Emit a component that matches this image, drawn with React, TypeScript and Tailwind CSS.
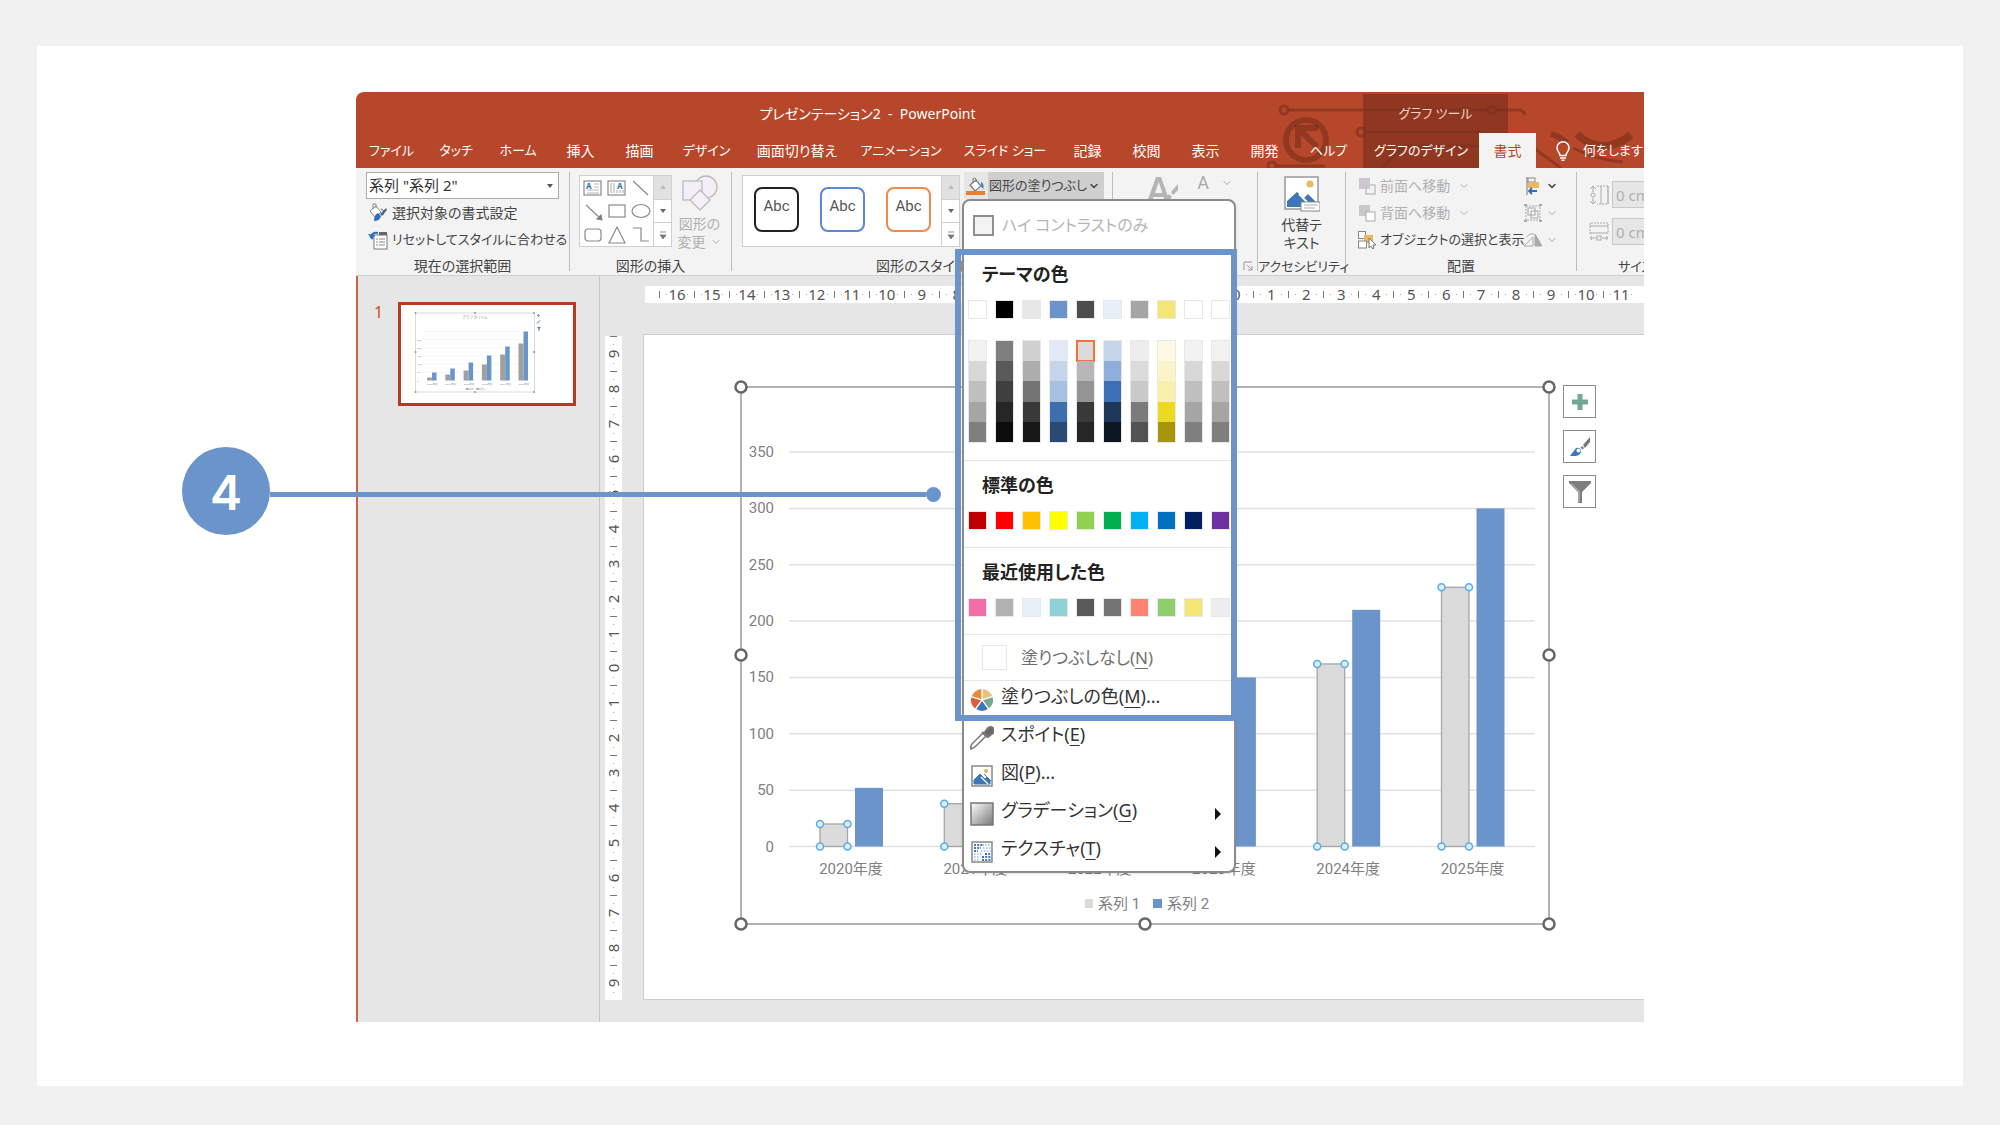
import type { ReactNode } from 'react'
import { FiChevronDown } from 'react-icons/fi'

const tabs = [
  'ファイル', 'タッチ', 'ホーム', '挿入', '描画', 'デザイン', '画面切り替え', 'アニメーション',
  'スライド ショー', '記録', '校閲', '表示', '開発', 'ヘルプ',
]

const themeColors = ['#ffffff', '#000000', '#e7e7e7', '#6b95ca', '#4d4d4d', '#e8eff8', '#a5a5a5', '#f4e675', '#ffffff', '#ffffff']

const tints = [
  ['#f2f2f2', '#d8d8d8', '#bfbfbf', '#a5a5a5', '#7f7f7f'],
  ['#7f7f7f', '#595959', '#3f3f3f', '#262626', '#0c0c0c'],
  ['#d0d0d0', '#adadad', '#737373', '#393939', '#171717'],
  ['#e1eaf4', '#c4d5ea', '#a6c0df', '#3d6fad', '#284a73'],
  ['#dbdbdb', '#b7b7b7', '#949494', '#393939', '#262626'],
  ['#c5d6eb', '#8faedb', '#3d6fb4', '#1e3859', '#0c1622'],
  ['#ededed', '#dbdbdb', '#c9c9c9', '#7b7b7b', '#525252'],
  ['#fcfae3', '#faf5c8', '#f8f0ac', '#ecd922', '#a6960d'],
  ['#f2f2f2', '#d8d8d8', '#bfbfbf', '#a5a5a5', '#7f7f7f'],
  ['#f2f2f2', '#d8d8d8', '#bfbfbf', '#a5a5a5', '#7f7f7f'],
]

const standardColors = ['#c00000', '#ff0000', '#ffc000', '#ffff00', '#92d050', '#00b050', '#00b0f0', '#0070c0', '#002060', '#7030a0']
const recentColors = ['#f16ea8', '#b2b2b2', '#e8eff8', '#8ed2d8', '#595959', '#737373', '#ff836f', '#8ecf6d', '#f4e675', '#ededf0']

const chartData = [
  { label: '2020年度', a: 20, b: 52 },
  { label: '2021年度', a: 38, b: 75 },
  { label: '2022年度', a: 65, b: 110 },
  { label: '2023年度', a: 102, b: 150 },
  { label: '2024年度', a: 162, b: 210 },
  { label: '2025年度', a: 230, b: 300 },
]

/* ---------- header ---------- */

function HeaderArt() {
  return (
    <svg className="absolute top-0 left-[907px] w-[380px] h-[76px]" viewBox="0 0 380 76" fill="none" stroke="#000" strokeOpacity="0.2" strokeWidth="3">
      <circle cx="21" cy="18" r="4" />
      <path d="M26 18H224M234 18H254q7 0 8 5" />
      <circle cx="229" cy="18" r="4" />
      <circle cx="43" cy="48" r="20" strokeWidth="6" />
      <path d="M35 56V36h20M36 37l18 18" strokeWidth="6" />
      <circle cx="9" cy="74" r="4" />
      <path d="M14 74H62M103 40H218" />
      <circle cx="98" cy="40" r="4" />
      <path d="M118 76L142 54H260q10 0 16 6L298 76" />
      <path d="M288 42q10 3 16 9" strokeWidth="6" />
      <path d="M314 42q24 24 54 1" strokeWidth="8" />
      <path d="M310 56q24 12 50 14" />
    </svg>
  )
}

function Header() {
  return (
    <header className="relative overflow-hidden rounded-tl-lg bg-[#b7472a] text-sm text-white whitespace-nowrap">
      <HeaderArt />
      <div className="relative grid grid-cols-[1007px_145px_1fr] h-[41px] pt-[2px]">
        <div className="flex items-center justify-center pl-4 whitespace-pre">プレゼンテーション2  -  PowerPoint</div>
        <div className="flex items-center justify-center bg-[#7a2f1c]/65 text-[13px] text-[#f5cfc4]">グラフ ツール</div>
      </div>
      <nav className="relative grid grid-cols-[71px_58px_66px_59px_59px_75px_106px_102px_106px_59px_59px_59px_59px_69px_116px_57px_1fr] h-[35px]">
        {tabs.map((t) => (
          <button key={t} className={`flex items-center justify-center ${/[ァ-ヶ]/.test(t) ? 'text-[13px]' : 'text-sm'}`}>{t}</button>
        ))}
        <button className="flex items-center justify-center bg-[#7a2f1c]/65 text-[13px]">グラフのデザイン</button>
        <button className="flex items-center justify-center bg-[#f3f3f3] text-[#b7472a]">書式</button>
        <button className="flex items-center gap-3 pl-[19px] text-[13px]">
          <svg className="w-4 h-5 shrink-0" viewBox="0 0 16 20" fill="none" stroke="#fff" strokeWidth="1.5">
            <path d="M5 14.500C5 11.500 2 10.500 2 6.800a6 6 0 0 1 12 0C14 10.500 11 11.500 11 14.500zM5 17h6M6.500 19.200h3" />
          </svg>
          何をします
        </button>
      </nav>
    </header>
  )
}

/* ---------- ribbon ---------- */

function Group({ label, className, children }: { label: string; className: string; children: ReactNode }) {
  return (
    <section className={`flex flex-col shrink-0 pt-1 pb-1 ${className}`}>
      <div className="relative flex flex-col h-full border-r border-[#bdbdbd]">
        <div className="flex-1">{children}</div>
        <h2 className="-mb-1 h-[18px] text-center leading-[18px]">{label}</h2>
      </div>
    </section>
  )
}

function GalleryScroll() {
  return (
    <div className="flex flex-col w-[18px] border-l border-[#d0d0d0]">
      <button aria-label="上へ" className="flex-1 flex items-center justify-center bg-[#e1e1e1]">
        <svg className="w-2 h-1" viewBox="0 0 8 4"><path d="M1 4L4 0l3 4z" fill="#bbb" /></svg>
      </button>
      <button aria-label="下へ" className="flex-1 flex items-center justify-center bg-white border-y border-[#d0d0d0]">
        <svg className="w-2 h-1" viewBox="0 0 8 4"><path d="M1 0h6L4 4z" fill="#666" /></svg>
      </button>
      <button aria-label="その他" className="flex-1 flex items-center justify-center bg-white">
        <svg className="w-2 h-2" viewBox="0 0 8 8"><path d="M1 1h6M1 4h6L4 8z" fill="#777" stroke="#777" strokeWidth="0.8" /></svg>
      </button>
    </div>
  )
}

function ShapeGrid() {
  return (
    <svg className="w-[73px] h-[70px] bg-white" viewBox="0 0 73 70" fill="none" stroke="#8a8a8a" strokeWidth="1.2">
      <rect x="4" y="5" width="17" height="14" />
      <path d="M14 8h5M14 11h5M7 14h12M7 17h12" stroke="#b5b5b5" />
      <text x="6" y="13" fontSize="8" fontWeight="700" fill="#2f6db5" stroke="none">A</text>
      <rect x="28" y="5" width="17" height="14" />
      <path d="M31 7v10M34 7v10M37 14v3M40 14v3M43 14v3" stroke="#b5b5b5" />
      <text x="37" y="13" fontSize="8" fontWeight="700" fill="#2f6db5" stroke="none">A</text>
      <path d="M53 5l15 14M6 29l14 13" />
      <path d="M22 44l-5-1 4-4z" fill="#777" />
      <rect x="29" y="29" width="16" height="12" />
      <ellipse cx="61" cy="35" rx="9" ry="6.500" />
      <rect x="5" y="53" width="16" height="12" rx="3" />
      <path d="M37 51l8 16H29zM53 52h8v13h8" />
    </svg>
  )
}

function BucketIcon() {
  return (
    <svg className="w-5 h-[18px]" viewBox="0 0 20 18" fill="none">
      <path d="M4 8l6-5 5 6-6 5z" fill="#fff" stroke="#777" strokeWidth="1.200" />
      <path d="M7 6V2q1-2 3 0v3" stroke="#777" />
      <path d="M15 5q3 1 2.500 7l-2-2z" fill="#2f78bd" />
      <rect y="14" width="19" height="4" fill="#ed7d31" />
    </svg>
  )
}

function SelectionGroup() {
  return (
    <Group label="現在の選択範囲" className="w-[214px]">
      <div className="flex flex-col px-[10px]">
        <div className="relative flex items-center">
          <select aria-label="グラフ要素" className="w-full h-[27px] appearance-none border border-[#ababab] bg-white pl-[2px] text-[15px] text-[#333]">
            <option>系列 "系列 2"</option>
          </select>
          <svg className="absolute right-[5px] w-2 h-1 pointer-events-none" viewBox="0 0 8 4"><path d="M1 0h6L4 4z" fill="#555" /></svg>
        </div>
        <button className="flex items-center gap-1 h-[27px] pl-[2px]">
          <svg className="w-5 h-5 shrink-0" viewBox="0 0 20 20" fill="none">
            <path d="M2 8l6-5 5 6-6 5z" fill="#fff" stroke="#888" />
            <path d="M5 6V1h3v4" stroke="#888" />
            <path d="M6 18q0-6 4-8l3 3q-1 5-7 5z" fill="#2f6db5" />
            <path d="M12 11l6-6 1 2-5 6z" fill="#666" />
            <path d="M13 6q4 1 2 6" stroke="#2f6db5" />
          </svg>
          選択対象の書式設定
        </button>
        <button className="flex items-center gap-1 h-[27px] pl-[2px] text-[13px]">
          <svg className="w-5 h-5 shrink-0" viewBox="0 0 20 20" fill="none">
            <rect x="6" y="5" width="13" height="14" fill="#fff" stroke="#777" />
            <path d="M11 2h8v3h-8z" fill="#666" />
            <path d="M8 9h2M8 12h2M8 15h2M11 9h6M11 12h6M11 15h6" stroke="#888" />
            <path d="M3 8Q3 2 10 3" stroke="#2f6db5" strokeWidth="2" />
            <path d="M0 4l7 1-3 5z" fill="#2f6db5" />
          </svg>
          リセットしてスタイルに合わせる
        </button>
      </div>
    </Group>
  )
}

function InsertGroup() {
  return (
    <Group label="図形の挿入" className="w-[162px]">
      <div className="flex pt-[3px] pl-[9px] pr-1">
        <div className="flex h-[72px] border border-[#d0d0d0]">
          <ShapeGrid />
          <GalleryScroll />
        </div>
        <button className="flex-1 flex flex-col items-center text-[#b0b0b0] leading-[18px]">
          <svg className="w-9 h-9 mb-1" viewBox="0 0 36 36" fill="#f4eff6" stroke="#bbb" strokeWidth="1.300">
            <circle cx="24" cy="12" r="11" />
            <rect x="1" y="6" width="19" height="19" />
            <path d="M18 15l10 10-10 10L8 25z" />
          </svg>
          <span>図形の</span>
          <span className="flex items-center gap-1">変更 <FiChevronDown className="size-3" /></span>
        </button>
      </div>
    </Group>
  )
}

function Swatch({ color }: { color: string }) {
  return <button aria-label={color} className="size-[19px] shrink-0 border border-[#e8e8e8]" style={{ backgroundColor: color }} />
}

function SwatchRow({ colors }: { colors: string[] }) {
  return (
    <div className="flex gap-2 mt-2 overflow-hidden">
      {colors.map((c, i) => <Swatch key={i} color={c} />)}
    </div>
  )
}

function MenuItem({ icon, text, hotkey, dots, arrow }: { icon: ReactNode; text: string; hotkey: string; dots?: boolean; arrow?: boolean }) {
  return (
    <button className="flex w-full items-center h-[38px] pl-[6px] pr-3 gap-[7px]">
      <svg className="w-6 h-6 shrink-0" viewBox="0 0 24 24">{icon}</svg>
      <span className="pb-2">{text}(<u className="underline-offset-4">{hotkey}</u>){dots && '...'}</span>
      {arrow && <svg className="ml-auto w-2 h-3" viewBox="0 0 8 12"><path d="M1 0l6 6-6 6z" fill="#111" /></svg>}
    </button>
  )
}

function FillMenu() {
  return (
    <div className="absolute left-[-2px] top-full z-10 w-[274px] rounded-lg border-2 border-[#8c8c8c] bg-white text-lg leading-6 text-[#333] shadow-sm">
      <label className="flex items-center gap-2 h-12 pl-[9px] text-base text-[#b5b5b5]">
        <input type="checkbox" className="appearance-none size-[21px] border-2 border-[#8f8f8f] bg-[#f3f3f3]" />
        ハイ コントラストのみ
      </label>
      <section className="border-b border-[#e6e6e6] pt-[7px] pb-[17px] pl-1">
        <h3 className="h-9 pl-3.5 leading-9 font-bold text-[#222]">テーマの色</h3>
        <SwatchRow colors={themeColors} />
        <div className="flex gap-2 mt-[21px] h-[103px] overflow-hidden">
          {tints.map((col, i) => (
            <div key={i} className="flex flex-col w-[19px] shrink-0 border border-[#e8e8e8]">
              {col.map((c, j) => (
                <button
                  key={j}
                  aria-label={c}
                  className={i === 4 && j === 0 ? 'flex-1 outline-2 -outline-offset-1 outline-[#f0733a]' : 'flex-1'}
                  style={{ backgroundColor: c }}
                />
              ))}
            </div>
          ))}
        </div>
      </section>
      <section className="border-b border-[#e6e6e6] pt-1.5 pb-[17px] pl-1">
        <h3 className="h-9 pl-3.5 leading-9 font-bold text-[#222]">標準の色</h3>
        <SwatchRow colors={standardColors} />
      </section>
      <section className="border-b border-[#e6e6e6] pt-1.5 pb-[17px] pl-1">
        <h3 className="h-9 pl-3.5 leading-9 font-bold text-[#222]">最近使用した色</h3>
        <SwatchRow colors={recentColors} />
      </section>
      <button className="flex w-full items-center gap-3.5 h-[46px] pl-[18px] border-b border-[#e6e6e6] text-[17px] text-[#707070]">
        <span className="size-[25px] border border-[#e6e6e6]" />
        <span>塗りつぶしなし(<u className="underline-offset-4">N</u>)</span>
      </button>
      <MenuItem
        text="塗りつぶしの色" hotkey="M" dots
        icon={
          <g stroke="#fff" strokeWidth="1.2">
            <path d="M12 12V0.500A11.500 11.500 0 0 1 23 8.500z" fill="#e8c07a" />
            <path d="M12 12L23 8.500A11.500 11.500 0 0 1 18.800 21.300z" fill="#74a893" />
            <path d="M12 12l6.800 9.300a11.500 11.500 0 0 1-13.600 0z" fill="#3d77b8" />
            <path d="M12 12L5.200 21.300A11.500 11.500 0 0 1 1 8.500z" fill="#d9603f" />
            <path d="M12 12L1 8.500A11.500 11.500 0 0 1 12 0.500z" fill="#e88a3c" />
          </g>
        }
      />
      <MenuItem
        text="スポイト" hotkey="E"
        icon={
          <g fill="none" stroke="#777" strokeWidth="1.500">
            <path d="M1 23q-1-4 3-7l9-9 3 3-9 9q-3 3-6 4z" />
            <path d="M12 6l5 5M14 7l4-5q3-2 5 0t0 5l-5 4z" fill="#666" strokeWidth="2" />
          </g>
        }
      />
      <MenuItem
        text="図" hotkey="P" dots
        icon={
          <>
            <rect x="2" y="2" width="20" height="20" fill="#fff" stroke="#888" strokeWidth="1.500" />
            <circle cx="16" cy="7" r="2" fill="#e8b25a" />
            <path d="M4 20v-4l6-6 5 5 2-2 3 3v4zM14 10l7 7" fill="#3d77b8" stroke="#3d77b8" />
            <path d="M11 13l7 7" stroke="#fff" strokeWidth="1.200" />
          </>
        }
      />
      <MenuItem
        text="グラデーション" hotkey="G" arrow
        icon={
          <>
            <defs>
              <linearGradient id="grad" x1="0" y1="0" x2="1" y2="1">
                <stop offset="0" stopColor="#fff" />
                <stop offset="1" stopColor="#777" />
              </linearGradient>
            </defs>
            <rect x="1" y="1" width="22" height="22" fill="url(#grad)" stroke="#777" strokeWidth="1.500" />
          </>
        }
      />
      <MenuItem
        text="テクスチャ" hotkey="T" arrow
        icon={
          <>
            <rect x="2" y="2" width="20" height="20" fill="#fff" stroke="#888" strokeWidth="1.500" />
            <g stroke="#3d77b8" strokeWidth="2" strokeDasharray="2 1.200">
              <path d="M4 5h10M4 8h7M4 11h4M12 20h9M12 17h9M15 14h6" />
            </g>
            <g stroke="#9dbbe0" strokeWidth="1.500" strokeDasharray="1.500 1.500">
              <path d="M15 5h6M13 8h8M11 11h10M4 14h9M4 17h6M4 20h6" />
            </g>
          </>
        }
      />
      {/* highlighted part of the menu */}
      <div className="absolute left-[-9px] top-12 w-[282px] h-[472px] border-6 border-[#6b95ca] pointer-events-none" />
    </div>
  )
}

function StyleBox({ className }: { className: string }) {
  return (
    <button className={`size-[45px] pb-1 rounded-lg border-2 bg-white font-[Roboto] text-[15px] text-[#555] ${className}`}>Abc</button>
  )
}

function StylesGroup() {
  return (
    <Group label="図形のスタイル" className="w-[381px]">
      <div className="flex items-start pl-[10px] pr-2">
        <div className="flex h-[72px] mt-[3px] border border-[#d0d0d0] bg-white">
          <div className="flex items-center gap-[21px] pl-[11px] pr-[10px] pb-1">
            <StyleBox className="border-[#222]" />
            <StyleBox className="border-[#5b87d6]" />
            <StyleBox className="border-[#f08a4b]" />
          </div>
          <GalleryScroll />
        </div>
        <div className="relative ml-1">
          <button className="flex items-center h-[27px] w-[140px] bg-[#cfcfcf] text-[13px]">
            <span className="flex items-center justify-center self-stretch w-6 bg-[#e6e6e6]"><BucketIcon /></span>
            <span className="flex-1">図形の塗りつぶし</span>
            <FiChevronDown className="size-3 mr-1" strokeWidth={3} />
          </button>
          <FillMenu />
        </div>
      </div>
    </Group>
  )
}

function WordArtGroup() {
  return (
    <Group label="" className="w-[145px]">
      <div className="flex items-start justify-end gap-4 pt-[3px] pr-6 text-[#aaa]">
        <svg className="w-9 h-9" viewBox="0 0 36 36" fill="#b5b5b5">
          <path d="M1 30L11 2h5l10 28h-5l-2.500-8H8.500L6 30zM10 18h7.500L13.700 7z" />
          <path d="M20 24l4-5 3 3-4 4zM26 17l7-8v6l-5 5z" />
        </svg>
        <button className="flex items-center gap-3 font-[Roboto] text-lg leading-4">A <FiChevronDown className="size-3" /></button>
      </div>
      <button aria-label="書式の詳細" className="absolute right-1 bottom-0">
        <svg className="w-[10px] h-[10px]" viewBox="0 0 10 10" fill="none" stroke="#999"><path d="M1 9V1h8M4 4l5 5M9 5v4H5" /></svg>
      </button>
    </Group>
  )
}

function AccessibilityGroup() {
  return (
    <Group label="アクセシビリティ" className="w-[88px] text-[13px]">
      <button className="flex w-full flex-col items-center pt-1 text-sm leading-[18px]">
        <svg className="w-9 h-9 mb-1" viewBox="0 0 36 36">
          <rect x="1" y="1" width="33" height="32" fill="#fff" stroke="#999" strokeWidth="1.500" />
          <circle cx="26" cy="8" r="3.500" fill="#e8b95f" />
          <path d="M3 31v-6l10-9 7 6 4-4 9 9v4z" fill="#3d77b8" />
          <path d="M15 18l9 9" stroke="#fff" strokeWidth="2" />
          <rect x="17" y="26" width="19" height="9" fill="#fff" stroke="#888" />
          <path d="M20 29h14M20 32h11" stroke="#aaa" />
        </svg>
        <span>代替テ</span>
        <span>キスト</span>
      </button>
    </Group>
  )
}

function ArrangeGroup() {
  return (
    <Group label="配置" className="w-[231px]">
      <div className="flex justify-between pl-3 pr-[22px]">
        <div className="flex flex-col">
          <button className="flex items-center gap-1 h-[27px] text-[#b0b0b0]">
            <svg className="w-[18px] h-[18px]" viewBox="0 0 18 18"><rect x="8" y="8" width="9" height="9" fill="none" stroke="#aaa" /><rect x="1" y="1" width="11" height="11" fill="#cdc6cf" /></svg>
            前面へ移動
            <FiChevronDown className="size-3 ml-1" />
          </button>
          <button className="flex items-center gap-1 h-[27px] text-[#b0b0b0]">
            <svg className="w-[18px] h-[18px]" viewBox="0 0 18 18"><rect x="1" y="1" width="11" height="11" fill="#cdc6cf" /><rect x="8" y="8" width="9" height="9" fill="#fff" stroke="#aaa" /></svg>
            背面へ移動
            <FiChevronDown className="size-3 ml-1" />
          </button>
          <button className="flex items-center gap-1 h-[27px] text-[13px]">
            <svg className="w-[18px] h-[18px]" viewBox="0 0 18 18">
              <rect x="0.500" y="0.500" width="7" height="7" fill="#fff" stroke="#888" />
              <rect x="6" y="4" width="9" height="8" fill="#e8b95f" />
              <rect x="0.500" y="10" width="8" height="7" fill="#fff" stroke="#888" />
              <path d="M11 7v10l2-2 2 3 1-1-1-3h3z" fill="#fff" stroke="#777" />
            </svg>
            オブジェクトの選択と表示
          </button>
        </div>
        <div className="flex flex-col">
          <button aria-label="配置" className="flex items-center gap-1 h-[27px]">
            <svg className="w-[18px] h-[18px]" viewBox="0 0 18 18" fill="none">
              <path d="M3 0v18" stroke="#777" />
              <rect x="4" y="1" width="7" height="4" stroke="#888" />
              <rect x="4" y="5" width="11" height="6" fill="#e8b95f" />
              <path d="M5 14h8M8 11l-3 3 3 3" stroke="#2f6db5" strokeWidth="1.800" />
            </svg>
            <FiChevronDown className="size-3" strokeWidth={3} />
          </button>
          <button aria-label="グループ化" className="flex items-center gap-1 h-[27px] text-[#aaa]">
            <svg className="w-[18px] h-[18px]" viewBox="0 0 18 18" fill="none" stroke="#aaa">
              <rect x="2" y="2" width="14" height="14" strokeDasharray="2 1" />
              <rect x="4" y="4" width="7" height="7" />
              <rect x="7" y="7" width="7" height="7" />
              <path d="M0 1h3M15 1h3M0 17h3M15 17h3" strokeWidth="2" />
            </svg>
            <FiChevronDown className="size-3" />
          </button>
          <button aria-label="回転" className="flex items-center gap-1 h-[27px] text-[#aaa]">
            <svg className="w-[18px] h-[18px]" viewBox="0 0 18 18" fill="none" stroke="#aaa">
              <path d="M0 15h9V6zM3 6q2-4 7-3" />
              <path d="M11 3v12h7z" fill="#aaa" />
            </svg>
            <FiChevronDown className="size-3" />
          </button>
        </div>
      </div>
    </Group>
  )
}

function SizeGroup() {
  return (
    <section className="flex flex-col flex-1 overflow-hidden pl-3 pt-[13px]">
      <div className="flex flex-col gap-[10px] flex-1">
        <label className="flex items-center gap-[3px]">
          <svg className="w-5 h-5 shrink-0" viewBox="0 0 20 20" fill="none" stroke="#aaa">
            <path d="M4 1v6M4 13v6M1 4l3-3 3 3M1 16l3 3 3-3" />
            <circle cx="4" cy="10" r="2" />
            <path d="M8 1h11v18H8" strokeDasharray="2 1" /><path d="M12 1v18M19 1v18" />
          </svg>
          <input aria-label="高さ" disabled defaultValue="0 cm" className="w-20 shrink-0 h-[27px] border border-[#c8c8c8] bg-[#e6e6e6] pl-[3px] text-[15px] text-[#b0b0b0]" />
        </label>
        <label className="flex items-center gap-[3px]">
          <svg className="w-5 h-5 shrink-0" viewBox="0 0 20 20" fill="none" stroke="#aaa">
            <path d="M1 12V1h18v11" strokeDasharray="2 1" /><path d="M1 4h18M1 11h18" />
            <path d="M1 16h6M13 16h6M3 14l-2 2 2 2M17 14l2 2-2 2" /><rect x="8" y="14" width="4" height="4" />
          </svg>
          <input aria-label="幅" disabled defaultValue="0 cm" className="w-20 shrink-0 h-[27px] border border-[#c8c8c8] bg-[#e6e6e6] pl-[3px] text-[15px] text-[#b0b0b0]" />
        </label>
      </div>
      <h2 className="h-[18px] pl-[29px] text-[13px] leading-[18px]">サイズ</h2>
    </section>
  )
}

function Ribbon() {
  return (
    <div className="relative z-10 flex h-[108px] border-b border-[#d0d0d0] bg-[#f3f3f3] text-sm text-[#444] whitespace-nowrap">
      <SelectionGroup />
      <InsertGroup />
      <StylesGroup />
      <WordArtGroup />
      <AccessibilityGroup />
      <ArrangeGroup />
      <SizeGroup />
    </div>
  )
}

/* ---------- editor ---------- */

const hMarks = Array.from({ length: 28 }, (_, i) => Math.abs(16 - i))
const vMarks = Array.from({ length: 19 }, (_, i) => Math.abs(9 - i))

function HorizontalRuler() {
  return (
    <div className="grid grid-cols-[repeat(28,1fr)] h-[17px] ml-[45px] pl-3.5 pr-1.5 bg-white text-[15px] leading-[17px] text-[#555]">
      {hMarks.map((n, i) => (
        <div key={i} className="flex items-center">
          <span className="w-px h-[7px] bg-[#777]" />
          <span className="flex-1 flex items-center justify-between px-[6px]">
            <span className="size-px bg-[#aaa]" />
            {n}
            <span className="size-px bg-[#aaa]" />
          </span>
        </div>
      ))}
    </div>
  )
}

function VerticalRuler() {
  return (
    <div className="grid grid-rows-[repeat(19,1fr)] w-[17px] mt-[2px] bg-white text-[15px] text-[#555]">
      {vMarks.map((n, i) => (
        <div key={i} className="flex flex-col items-center">
          <span className="w-[7px] h-px bg-[#777]" />
          <span className="flex-1 flex flex-col items-center justify-between py-[7px]">
            <span className="size-px bg-[#aaa]" />
            <span className="-rotate-90 leading-[10px]">{n}</span>
            <span className="size-px bg-[#aaa]" />
          </span>
        </div>
      ))}
    </div>
  )
}

function Chart() {
  const y = (v: number) => 467.5 - v * 1.127
  return (
    <svg className="w-[824px] h-[554px] shrink-0 font-[Roboto,'Noto_Sans_CJK_JP',sans-serif]" viewBox="0 0 824 554" fontSize="15" fill="#808080">
      <rect x="8" y="8" width="808" height="537" fill="none" stroke="#999" strokeWidth="1.500" />
      {[0, 50, 100, 150, 200, 250, 300, 350].map((v) => (
        <g key={v}>
          <path d={`M56 ${y(v)}H802`} stroke="#e1e1e1" strokeWidth="1.500" />
          <text x="41" y={y(v) + 5} textAnchor="end">{v}</text>
        </g>
      ))}
      {chartData.map((d, i) => {
        const x = 87 + i * 124.3
        return (
          <g key={d.label}>
            <rect x={x} y={y(d.a)} width="27.500" height={d.a * 1.127} fill="#dbdbdb" stroke="#a6a6a6" strokeWidth="1.300" />
            <rect x={x + 35} y={y(d.b)} width="28" height={d.b * 1.127} fill="#6b95ca" />
            {[x, x + 27.5].map((cx) => [y(d.a), y(0)].map((cy) => (
              <circle key={`${cx}-${cy}`} cx={cx} cy={cy} r="3.500" fill="#dcefff" stroke="#5aabe8" strokeWidth="1.500" />
            )))}
            <text x={x + 31} y="495" textAnchor="middle">{d.label}</text>
          </g>
        )
      })}
      <rect x="352" y="520" width="8" height="9" fill="#dbdbdb" />
      <text x="365" y="530">系列 1</text>
      <rect x="420" y="520" width="9" height="9" fill="#6b95ca" />
      <text x="434" y="530">系列 2</text>
      {[[8, 8], [412, 8], [816, 8], [8, 276], [816, 276], [8, 545], [412, 545], [816, 545]].map(([cx, cy]) => (
        <circle key={`${cx}-${cy}`} cx={cx} cy={cy} r="5.500" fill="#fff" stroke="#666" strokeWidth="2.500" />
      ))}
    </svg>
  )
}

function ChartButtons() {
  const cls = 'flex items-center justify-center size-[33px] border border-[#8c8c8c] bg-white'
  return (
    <div className="flex flex-col gap-3 pt-[6px]">
      <button aria-label="グラフ要素" className={cls}>
        <svg className="size-4" viewBox="0 0 16 16"><path d="M5.500 0h5v5.500H16v5h-5.500V16h-5v-5.500H0v-5h5.500z" fill="#74a893" /></svg>
      </button>
      <button aria-label="グラフ スタイル" className={cls}>
        <svg className="size-5" viewBox="0 0 20 20">
          <path d="M13 8l7-8v5l-5 6zM12 9l2 2-1.500 1.500-2-2z" fill="#777" />
          <path d="M0 19l6-8q5-1 5 3t-5 5z" fill="#3d77b8" />
          <circle cx="8.500" cy="13.500" r="2" fill="#fff" />
        </svg>
      </button>
      <button aria-label="グラフ フィルター" className={cls}>
        <svg className="w-[22px] h-[22px]" viewBox="0 0 22 22"><path d="M0 0h22v2l-9 9v11H9V11L0 2z" fill="#7d7d7d" /><path d="M2 2.500l8 8V21" stroke="#ccc" fill="none" /></svg>
      </button>
    </div>
  )
}

function Thumbnail() {
  const a = [3, 6, 10, 16, 26, 37]
  const b = [8, 12, 18, 25, 34, 49]
  return (
    <svg className="block w-full" viewBox="0 0 172 98" fontSize="2.500" fill="#999">
      <rect width="172" height="98" fill="#fff" />
      <rect x="14.500" y="8" width="119" height="79" fill="none" stroke="#ccc" strokeWidth="0.700" />
      {a.map((h, i) => (
        <g key={i}>
          <path d={`M21 ${75.5 - (i + 1) * 8.2}H129`} stroke="#eee" strokeWidth="0.600" />
          <text x="16" y={76.5 - i * 8.2}>{i * 50}</text>
          <rect x={26 + i * 18.3} y={75.5 - h} width="5" height={h} fill="#a0a0a0" />
          <rect x={31 + i * 18.3} y={75.5 - b[i]} width="4.500" height={b[i]} fill="#6b95ca" />
          <text x={26 + i * 18.3} y="79.500">{chartData[i].label}</text>
        </g>
      ))}
      <text x="74" y="13.500" fontSize="4" textAnchor="middle">グラフ タイトル</text>
      <text x="65" y="84.500">■系列 1 ■系列 2</text>
      {[[14.5, 8], [74, 8], [133, 8], [14.5, 47], [133, 47], [14.5, 87], [74, 87], [133, 87]].map(([x, y]) => (
        <circle key={`${x}-${y}`} cx={x} cy={y} r="1" fill="#999" />
      ))}
      <path d="M136 10.500h3M137.500 9v3" stroke="#74a893" />
      <path d="M136 18.500l3-3" stroke="#3d77b8" />
      <path d="M136 22h4l-1.500 2v2h-1v-2z" fill="#777" />
    </svg>
  )
}

function Editor() {
  return (
    <div className="flex bg-[#e6e6e6] border-l-2 border-[#c8644a]">
      <aside className="flex items-start gap-4 w-[242px] shrink-0 pl-4 pt-[26px] border-r border-[#c6c6c6]">
        <span className="w-2 text-base leading-5 text-[#d24726]">1</span>
        <button aria-label="スライド 1" className="w-[178px] border-3 border-[#b83b1d]">
          <Thumbnail />
        </button>
      </aside>
      <div className="flex-1 overflow-hidden pt-[10px] pb-[22px]">
        <HorizontalRuler />
        <div className="flex mt-[31px] pl-[5px] gap-[21px]">
          <VerticalRuler />
          <div className="flex flex-1 gap-[6px] pt-[44px] pb-[66px] pl-[89px] border-t border-l border-b border-[#cccccc] bg-white">
            <Chart />
            <ChartButtons />
          </div>
        </div>
      </div>
    </div>
  )
}

export default function App() {
  return (
    <main className="min-h-screen flex flex-col bg-[#f1f1f1] px-[37px] pt-[46px] pb-10 font-['Noto_Sans','Noto_Sans_CJK_JP',sans-serif] [font-feature-settings:'palt']">
      <div className="flex-1 bg-white pt-[46px] pb-16">
        <div className="relative w-full max-w-[1288px] mx-auto">
          <Header />
          <Ribbon />
          <Editor />
          {/* callout */}
          <div className="absolute z-20 left-[-174px] top-[355px] flex items-center w-[759px]">
            <div className="flex items-center justify-center size-[88px] shrink-0 rounded-full bg-[#6b95ca] pt-1 text-white text-5xl font-semibold font-[Inter,sans-serif]">4</div>
            <div className="flex-1 flex items-center mt-1.5">
              <div className="flex-1 h-[5px] bg-[#6b95ca]" />
              <div className="size-[15px] rounded-full bg-[#6b95ca]" />
            </div>
          </div>
        </div>
      </div>
    </main>
  )
}
